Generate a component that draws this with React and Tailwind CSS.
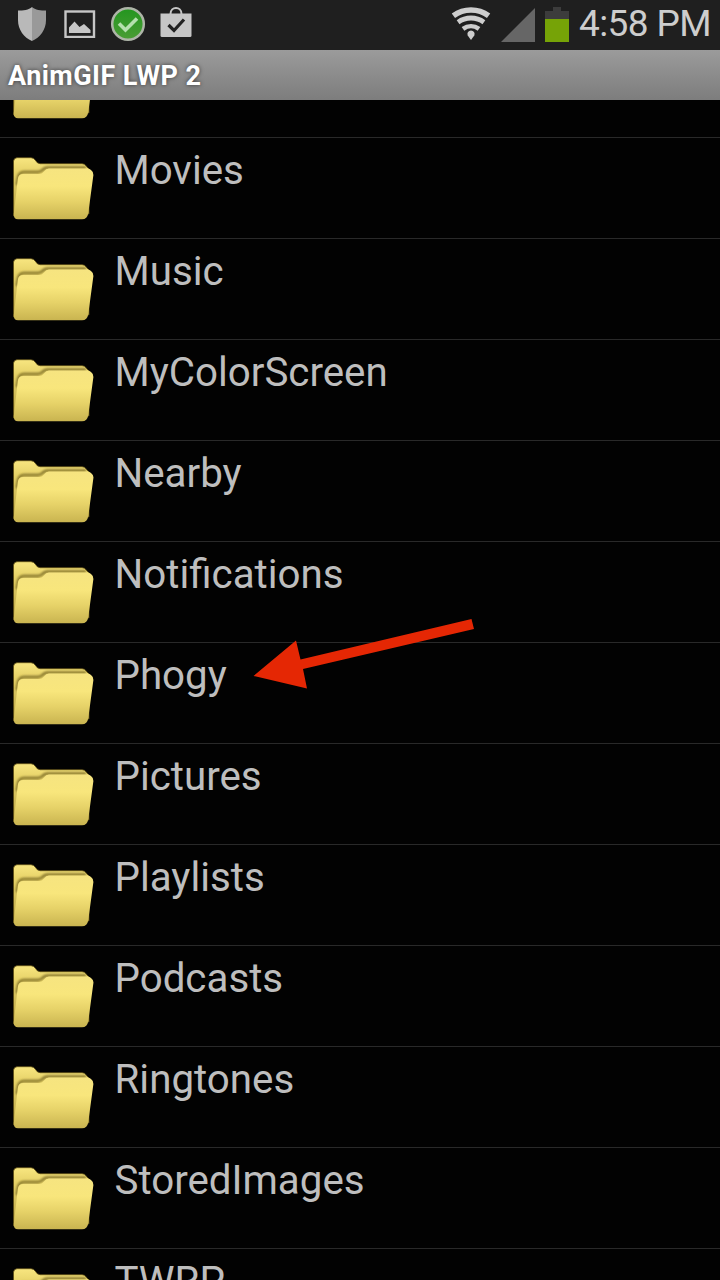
import React from 'react'

// the first row is scrolled under the title bar, only its icon's bottom edge shows
const FOLDERS = [
  '',
  'Movies',
  'Music',
  'MyColorScreen',
  'Nearby',
  'Notifications',
  'Phogy',
  'Pictures',
  'Playlists',
  'Podcasts',
  'Ringtones',
  'StoredImages',
  'TWRP',
]

function FolderIcon() {
  return (
    <svg viewBox="0 0 104 100" className="w-[104px] h-[100px] shrink-0">
      <defs>
        <linearGradient id="back" x1="0" y1="0" x2="0" y2="1">
          <stop offset="0" stopColor="#f8e680" />
          <stop offset="0.25" stopColor="#e6d268" />
          <stop offset="1" stopColor="#b8a346" />
        </linearGradient>
        <linearGradient id="front" x1="0" y1="0" x2="0" y2="1">
          <stop offset="0" stopColor="#f6e480" />
          <stop offset="0.35" stopColor="#f8e67c" />
          <stop offset="0.65" stopColor="#e6d268" />
          <stop offset="1" stopColor="#c9b450" />
        </linearGradient>
        <filter id="soft" x="-10%" y="-100%" width="120%" height="300%">
          <feGaussianBlur stdDeviation="0.8" />
        </filter>
      </defs>
      <path
        d="M13.5 78V23Q14 20 17 19.7H31Q34 19.7 35.5 22.500Q37 25.500 40 25.700H82Q85 25.700 86 28L89 31V76H18Z"
        fill="url(#back)" stroke="#5c4d14" strokeWidth="0.8"
      />
      <path
        d="M17 47L18 40Q19 34 24 34H38Q41 34 43 31.500Q45 29.500 48 29.500H86"
        fill="none" stroke="#85752c" strokeWidth="2.6" filter="url(#soft)"
      />
      <path
        d="M13.8 76L17.8 41Q18.400 36 23 36H39Q42 36 44 33.500Q46 30.500 49 30.500H88Q89.500 30.500 91 32Q93.800 34 93.400 37L88.300 75Q87.300 81.300 82 81.300H18Q13.400 81.300 13.800 76Z"
        fill="url(#front)"
      />
    </svg>
  )
}

function ShieldIcon() {
  return (
    <svg viewBox="0 0 30 36" className="w-[30px] h-9">
      <path d="M15 1C12 4 6 4.500 1 4.500V14C1 24 7 31.500 15 35Z" fill="#b9b9b9" />
      <path d="M15 1C18 4 24 4.500 29 4.500V14C29 24 23 31.500 15 35Z" fill="#999" />
    </svg>
  )
}

function GalleryIcon() {
  return (
    <svg viewBox="0 0 32 28" className="w-8 h-7">
      <rect x="1.500" y="1.500" width="28.500" height="25.500" fill="none" stroke="#c6c6c6" strokeWidth="2.400" />
      <path d="M5 23V17.500L10.500 11.500L15.500 17L20 14L26.500 20V23Z" fill="#c6c6c6" />
    </svg>
  )
}

function DoneIcon() {
  return (
    <svg viewBox="0 0 36 36" className="w-9 h-9">
      <defs>
        <linearGradient id="done" x1="0" y1="0" x2="0" y2="1">
          <stop offset="0" stopColor="#23961f" />
          <stop offset="1" stopColor="#4b9d35" />
        </linearGradient>
      </defs>
      <circle cx="18" cy="18" r="15.800" fill="url(#done)" stroke="#aeb5a8" strokeWidth="2.500" />
      <path d="M9 17.500L15.500 24L27 12.500" fill="none" stroke="#b5e0ae" strokeWidth="3.600" />
    </svg>
  )
}

function StoreIcon() {
  return (
    <svg viewBox="0 0 32 32" className="w-8 h-8">
      <path d="M10.500 8C10.500 0 21.500 0 21.500 8" fill="none" stroke="#c6c6c6" strokeWidth="2" />
      <path d="M.5 7.500H31.500V29.500Q31.500 31 30 31H2Q.5 31 .5 29.500Z" fill="#c6c6c6" />
      <path d="M8.500 19L14 24.500L24 13.500" fill="none" stroke="#222" strokeWidth="3.200" />
    </svg>
  )
}

function WifiIcon() {
  return (
    <svg viewBox="0 0 40 34" className="w-10 h-[34px]" fill="none" stroke="#cdcdcd">
      <path d="M2.400 8.700A30 30 0 0 1 37.600 8.700" strokeWidth="5.600" />
      <path d="M7.100 15.200A22 22 0 0 1 32.900 15.200" strokeWidth="4.800" />
      <path d="M12 21.900A13.700 13.700 0 0 1 28 21.900" strokeWidth="4.600" />
      <path d="M20 33L16.700 28.500A3.600 3.600 0 1 1 23.300 28.500Z" fill="#cdcdcd" stroke="none" />
    </svg>
  )
}

function SignalIcon() {
  return (
    <svg viewBox="0 0 34 34" className="w-[34px] h-[34px]">
      <path d="M0 34L34 0V34Z" fill="#666" />
    </svg>
  )
}

function BatteryIcon() {
  return (
    <svg viewBox="0 0 24 35" className="w-6 h-[35px]">
      <path d="M8 0H16V4H24V12H0V4H8Z" fill="#3c3c3c" />
      <rect y="12" width="24" height="23" fill="#76a307" />
    </svg>
  )
}

function StatusBar() {
  return (
    <div className="h-[50px] shrink-0 flex items-start bg-[#1f1f1f] pl-[17px] pr-[9px]">
      <div className="pt-[5.500px]"><ShieldIcon /></div>
      <div className="pt-[10px] ml-[17px]"><GalleryIcon /></div>
      <div className="pt-[6px] ml-[14px]"><DoneIcon /></div>
      <div className="pt-[6px] ml-[14px]"><StoreIcon /></div>
      <div className="ml-auto pt-[7px]"><WifiIcon /></div>
      <div className="pt-[8px] ml-[10px]"><SignalIcon /></div>
      <div className="pt-[7px] ml-[10px]"><BatteryIcon /></div>
      <div className="ml-[10px] w-[132px] whitespace-nowrap text-[37px] leading-[48px] tracking-[-0.6px] text-[#cdcdcd]">4:58 PM</div>
    </div>
  )
}

function Arrow() {
  return (
    <svg viewBox="0 0 222 72" className="absolute left-[253px] top-[618px] w-[222px] h-[72px]">
      <path d="M0.500 58L43 22.500L47.500 41.500L218.500 1L221 11L50 51L54 70.500Z" fill="#e52704" />
    </svg>
  )
}

export default function App() {
  return (
    <div className="relative w-[720px] h-[1280px] overflow-hidden flex flex-col bg-[#020202] font-['Roboto',sans-serif]">
      <StatusBar />
      <div className="h-[50px] shrink-0 flex items-center pl-2 pt-[2px] bg-linear-to-b from-[#9b9b9b] to-[#7d7d7d]">
        <span className="text-[27px] font-bold tracking-[0.45px] text-white [text-shadow:0_0_4px_rgba(0,0,0,0.6)]">AnimGIF LWP 2</span>
      </div>

      <div className="flex-1 min-h-0 overflow-hidden">
        <div className="-mt-[63px]">
          {FOLDERS.map((name) => (
            <div key={name} className="h-[101px] flex items-start border-b border-[#292929]">
              <FolderIcon />
              <span className="pt-[9px] pl-[10.500px] text-[40.300px] leading-[47px] text-[#bebebe]">{name}</span>
            </div>
          ))}
        </div>
      </div>

      <Arrow />
    </div>
  )
}
